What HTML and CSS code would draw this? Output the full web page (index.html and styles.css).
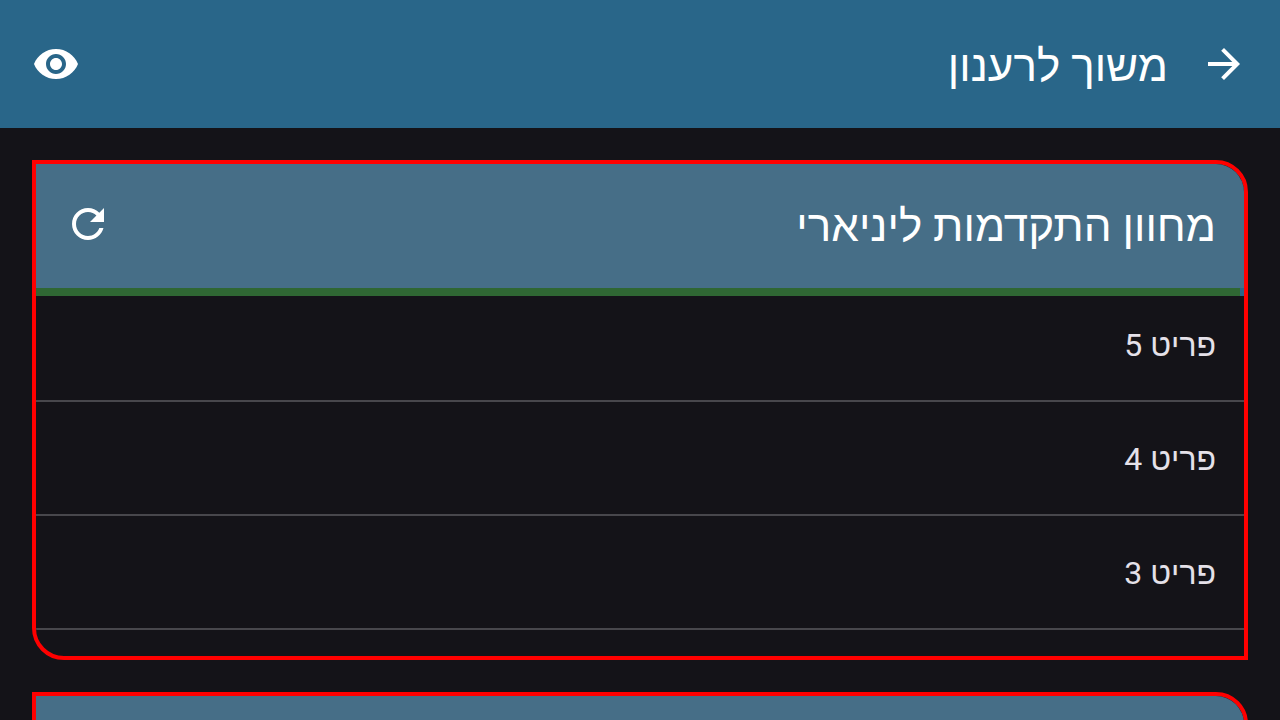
FILE: index.html
```
<!DOCTYPE html>
<html lang="he" dir="rtl">
<head>
<meta charset="utf-8">
<meta name="viewport" content="width=device-width, initial-scale=1">
<title>משוך לרענון</title>
<link rel="stylesheet" href="styles.css">
</head>
<body>
<header class="app-bar">
  <button class="icon-button" type="button" aria-label="חזרה">
    <svg class="icon" viewBox="0 0 24 24" aria-hidden="true"><path d="M12 4l-1.410 1.410L16.170 11H4v2h12.170l-5.580 5.590L12 20l8-8z"/></svg>
  </button>
  <h1 class="title">משוך לרענון</h1>
  <button class="icon-button" type="button" aria-label="תצוגה">
    <svg class="icon" viewBox="0 0 24 24" aria-hidden="true"><path d="M12 4.500C7 4.500 2.730 7.610 1 12c1.730 4.390 6 7.500 11 7.500s9.270-3.110 11-7.500c-1.730-4.390-6-7.500-11-7.500zM12 17c-2.760 0-5-2.240-5-5s2.240-5 5-5 5 2.240 5 5-2.240 5-5 5zm0-8c-1.660 0-3 1.340-3 3s1.340 3 3 3 3-1.340 3-3-1.340-3-3-3z"/></svg>
  </button>
</header>
<main class="content">
  <section class="card">
    <div class="card-header">
      <h2 class="title">מחוון התקדמות ליניארי</h2>
      <button class="icon-button" type="button" aria-label="רענון">
        <svg class="icon" viewBox="0 0 24 24" aria-hidden="true"><path d="M17.650 6.350C16.200 4.900 14.210 4 12 4c-4.420 0-7.990 3.580-7.990 8s3.570 8 7.990 8c3.730 0 6.840-2.550 7.730-6h-2.080c-.82 2.330-3.040 4-5.650 4-3.310 0-6-2.690-6-6s2.690-6 6-6c1.660 0 3.140.69 4.220 1.780L13 11h7V4l-2.350 2.350z"/></svg>
      </button>
    </div>
    <div class="card-body">
      <div class="progress" role="progressbar" aria-label="טעינה"><div class="progress-bar"></div></div>
      <ul class="list">
        <li class="item">פריט 5</li>
        <li class="item">פריט 4</li>
        <li class="item">פריט 3</li>
      </ul>
    </div>
  </section>
  <section class="card">
    <div class="card-header"></div>
  </section>
</main>
</body>
</html>
```
FILE: styles.css
```
* {
  box-sizing: border-box;
}

body {
  display: flex;
  flex-direction: column;
  height: 100vh;
  margin: 0;
  overflow: hidden;
  background: #141318;
  color: #e5e1e9;
  font-family: Roboto, "Liberation Sans", sans-serif;
}

.app-bar {
  display: flex;
  flex: none;
  align-items: center;
  gap: 32px;
  min-height: 128px;
  padding: 0 32px;
  background: #296689;
  color: #fff;
}

.title {
  flex: 1;
  margin: 0;
  padding-top: 4px;
  font-size: 44px;
  font-weight: 400;
  line-height: 56px;
}

.icon-button {
  flex: none;
  padding: 0;
  border: 0;
  background: none;
  color: inherit;
  cursor: pointer;
}

.icon {
  display: block;
  width: 48px;
  height: 48px;
  fill: currentColor;
}

.content {
  display: flex;
  flex: 1;
  flex-direction: column;
  gap: 32px;
  min-height: 0;
  padding: 32px;
  overflow: hidden;
}

.card {
  flex: none;
  overflow: hidden;
  border: 4px solid #f00;
  border-radius: 0 32px 0 32px;
}

.card-header {
  display: flex;
  align-items: center;
  gap: 32px;
  min-height: 124px;
  padding: 0 28px 4px;
  background: #466e87;
  color: #fff;
}

.card-body {
  position: relative;
}

.progress {
  position: absolute;
  top: 0;
  right: 0;
  left: 0;
  height: 8px;
  background: #296689;
}

.progress-bar {
  height: 100%;
  margin-right: 4px;
  background: #2f6733;
}

.list {
  margin: 0;
  padding: 0 0 26px;
  list-style: none;
}

.item {
  padding: 37px 28px 35px;
  border-bottom: 2px solid #48474c;
  font-size: 32px;
  line-height: 40px;
}
```
